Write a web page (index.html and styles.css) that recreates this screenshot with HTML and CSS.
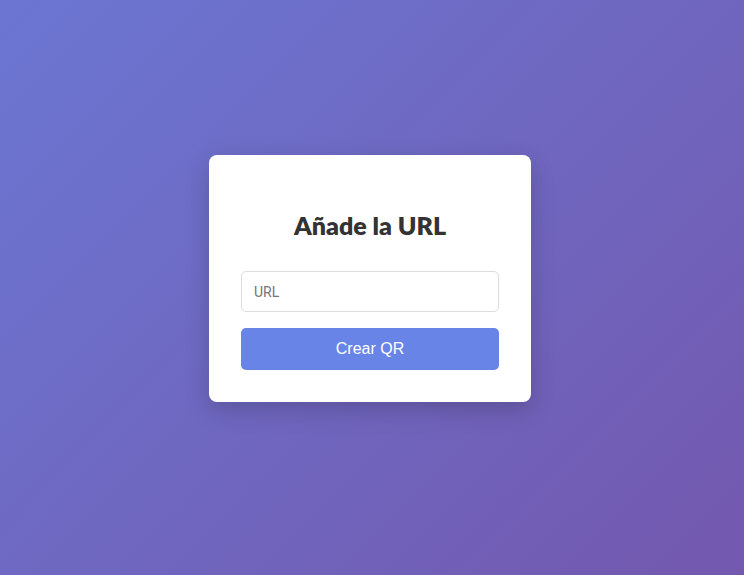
FILE: index.html
```html
<!DOCTYPE html>
<html lang="es">
<head>
<meta charset="utf-8">
<title>Crear QR</title>
<link rel="stylesheet" href="styles.css">
</head>
<body>
<main class="page">
  <section class="card">
    <h2 class="title">Añade la URL</h2>
    <form class="form">
      <input class="field" type="text" placeholder="URL">
      <button class="btn" type="button">Crear QR</button>
    </form>
  </section>
</main>
</body>
</html>
```

FILE: styles.css
```css
* { box-sizing: border-box; }
html, body { margin: 0; height: 100%; }
body {
  font-family: "Liberation Sans", Arial, sans-serif;
  background: linear-gradient(135deg, #6b76d2 0%, #7358ae 100%);
  min-height: 100vh;
}
.page {
  min-height: 100vh;
  display: flex;
  align-items: center;
  justify-content: center;
  padding: 0 4px 18px 0;
}
.card {
  width: 322px;
  background: #fff;
  border-radius: 8px;
  padding: 32px;
  box-shadow: 0 8px 24px rgba(0, 0, 0, 0.18);
}
.title {
  margin: 22px 0 30px;
  text-align: center;
  font-family: Lato, sans-serif;
  font-weight: 800;
  font-size: 25px;
  line-height: 32px;
  color: #333;
}
.form {
  display: flex;
  flex-direction: column;
  gap: 16px;
}
.field {
  height: 41px;
  width: 100%;
  border: 1px solid #ddd;
  border-radius: 5px;
  padding: 0 12px;
  font-family: Roboto, sans-serif;
  font-size: 14px;
  color: #333;
  outline: none;
}
.field::placeholder { color: #757575; }
.btn {
  height: 42px;
  width: 100%;
  border: none;
  border-radius: 5px;
  background: #6884e6;
  color: #fff;
  font-family: "Liberation Sans", Arial, sans-serif;
  font-size: 16px;
  cursor: pointer;
}
```
